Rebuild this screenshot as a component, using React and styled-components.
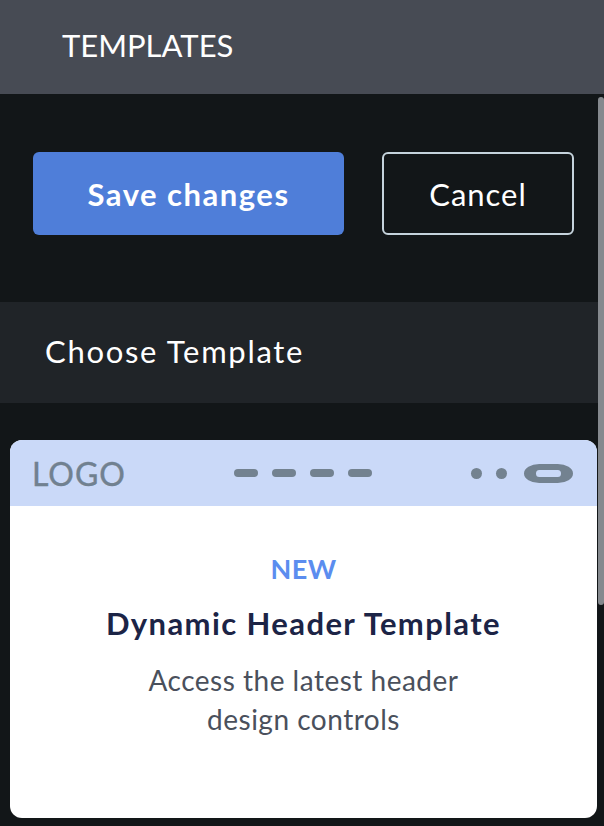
import styled, { createGlobalStyle } from "styled-components"

const GlobalStyle = createGlobalStyle`
  html, body {
    margin: 0;
    padding: 0;
    background: #121618;
    font-family: Lato, "Open Sans", sans-serif;
  }
`;

const Page = styled.div`
  position: relative;
  width: 604px;
  height: 826px;
  overflow: hidden;
  background: #121618;
`;

const TopBar = styled.div`
  height: 94px;
  box-sizing: border-box;
  background: #474b54;
  display: flex;
  align-items: center;
  padding: 0 0 4px 62px;
  color: #ffffff;
  font-size: 31px;
`;

const ButtonRow = styled.div`
  display: flex;
  gap: 38px;
  padding: 58px 30px 0 33px;
`;

const Button = styled.button`
  height: 83px;
  border-radius: 6px;
  font-family: inherit;
  font-size: 31px;
  color: #ffffff;
  cursor: pointer;
  ${({ $primary }) =>
    $primary
      ? `
    flex: 1;
    background: #4f7ed9;
    border: none;
    font-weight: 700;
    letter-spacing: 1.5px;
  `
      : `
    width: 192px;
    background: transparent;
    border: 2px solid #c5d3dc;
    font-weight: 400;
    letter-spacing: 1px;
  `}
`;

const SectionBar = styled.div`
  margin-top: 67px;
  height: 101px;
  box-sizing: border-box;
  background: #202428;
  display: flex;
  align-items: center;
  padding: 0 0 3px 45px;
  color: #ffffff;
  font-size: 31px;
  letter-spacing: 1.7px;
`;

const Card = styled.div`
  margin: 37px 7px 0 10px;
  height: 378px;
  border-radius: 12px;
  overflow: hidden;
  background: #ffffff;
  display: flex;
  flex-direction: column;
`;

const Preview = styled.div`
  height: 66px;
  background: #cad9f8;
  display: flex;
  align-items: center;
  padding: 0 24px 0 22px;
`;

const Logo = styled.span`
  color: #718190;
  font-size: 32px;
  letter-spacing: 1px;
  -webkit-text-stroke: 0.4px #718190;
`;

const NavDashes = styled.div`
  display: flex;
  gap: 14px;
  margin-left: 108px;
`;

const Dash = styled.span`
  width: 24px;
  height: 8px;
  border-radius: 4px;
  background: #738290;
`;

const Actions = styled.div`
  display: flex;
  align-items: center;
  gap: 14px;
  margin-left: auto;
`;

const Dot = styled.span`
  width: 11px;
  height: 11px;
  border-radius: 50%;
  background: #738290;
`;

const PillButton = styled.span`
  box-sizing: border-box;
  width: 49px;
  height: 19px;
  border-style: solid;
  border-color: #738290;
  border-width: 6px 12px;
  border-radius: 16px / 10px;
  margin-left: 3px;
`;

const CardBody = styled.div`
  flex: 1;
  text-align: center;
  padding-top: 47px;
`;

const Tag = styled.div`
  color: #5b8def;
  font-size: 27px;
  font-weight: 700;
  letter-spacing: 0.5px;
  line-height: 32px;
`;

const Title = styled.div`
  margin-top: 20px;
  color: #1c2446;
  font-size: 31px;
  font-weight: 700;
  letter-spacing: 1.4px;
  line-height: 36px;
`;

const Description = styled.div`
  margin: 20px auto 0;
  width: 340px;
  color: #4a505c;
  font-size: 28px;
  letter-spacing: 0.5px;
  line-height: 39px;
`;

const ScrollThumb = styled.div`
  position: absolute;
  top: 97px;
  right: 0;
  width: 6px;
  height: 508px;
  border-radius: 4px;
  background: #85898e;
`;

const App = () => {
  return (
    <Page>
      <GlobalStyle />
      <TopBar>TEMPLATES</TopBar>
      <ButtonRow>
        <Button $primary>Save changes</Button>
        <Button>Cancel</Button>
      </ButtonRow>
      <SectionBar>Choose Template</SectionBar>
      <Card>
        <Preview>
          <Logo>LOGO</Logo>
          <NavDashes>
            <Dash />
            <Dash />
            <Dash />
            <Dash />
          </NavDashes>
          <Actions>
            <Dot />
            <Dot />
            <PillButton />
          </Actions>
        </Preview>
        <CardBody>
          <Tag>NEW</Tag>
          <Title>Dynamic Header Template</Title>
          <Description>Access the latest header design controls</Description>
        </CardBody>
      </Card>
      <ScrollThumb />
    </Page>
  )
}

export default App
